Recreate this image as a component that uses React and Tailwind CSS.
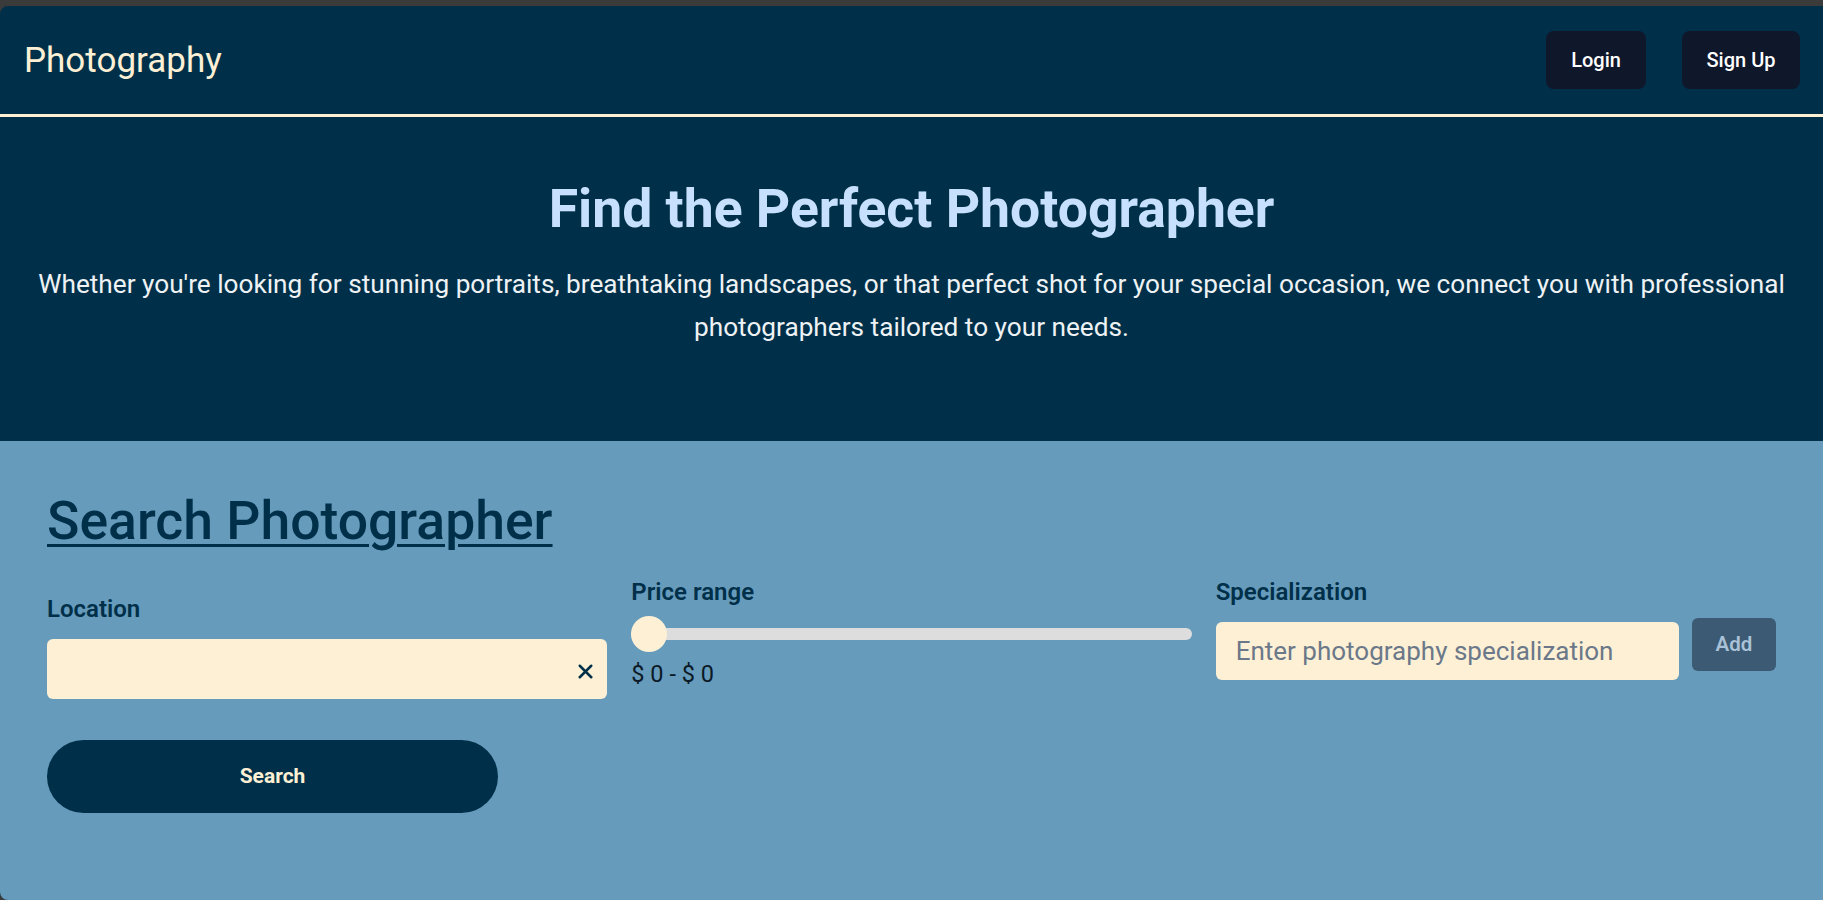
import { X } from 'lucide-react';

const font = { fontFamily: 'Roboto, "Noto Sans", sans-serif' };

function Navbar() {
  return (
    <nav className="flex items-center justify-between h-[111px] pl-[24px] pr-[23px] border-b-[3px] border-[#fdf0d5]">
      <span className="text-[35px] text-[#fdf0d5] leading-none">Photography</span>
      <div className="flex items-center gap-[36px]">
        <button className="w-[100px] h-[58px] rounded-lg bg-[#0f172a] text-white text-[20px] font-medium">Login</button>
        <button className="w-[118px] h-[58px] rounded-lg bg-[#0f172a] text-white text-[20px] font-medium">Sign Up</button>
      </div>
    </nav>
  );
}

function Hero() {
  return (
    <section className="h-[324px] pt-[62px] px-[20px] text-center">
      <h1 className="text-[53.5px] leading-[60px] font-bold text-[#c7e0fd]">Find the Perfect Photographer</h1>
      <p className="mt-[24px] text-[26.2px] leading-[43px] text-[#eef2f4]">
        Whether you're looking for stunning portraits, breathtaking landscapes, or that perfect shot for your special occasion, we connect you with professional photographers tailored to your needs.
      </p>
    </section>
  );
}

function SearchPanel() {
  return (
    <section className="flex-1 bg-[#669bbc] pt-[53px] px-[47px]">
      <h2 className="text-[53.5px] leading-[54px] font-medium text-[#003049] underline decoration-[3px] underline-offset-[5px]">
        Search Photographer
      </h2>

      <div className="grid grid-cols-3 gap-6 mt-[30px] items-start">
        {/* location */}
        <div className="flex flex-col mt-[17px]">
          <label className="text-[24px] leading-[28px] font-semibold text-[#003049]">Location</label>
          <div className="relative mt-[16px] h-[60px] rounded-md bg-[#fdf0d5]">
            <X className="absolute right-[10px] top-[21px] w-[23px] h-[23px] text-[#003049]" strokeWidth={2.6} />
          </div>
        </div>

        {/* price range */}
        <div className="flex flex-col">
          <label className="text-[24px] leading-[28px] font-semibold text-[#003049]">Price range</label>
          <div className="relative mt-[10px] h-[36px] flex items-center">
            <div className="w-full h-[12px] rounded-full bg-[#dddddd]" />
            <div className="absolute left-0 top-0 w-[36px] h-[36px] rounded-full bg-[#fdf0d5]" />
          </div>
          <span className="mt-[8px] text-[23.5px] leading-[28px] text-[#0b1a26]">$ 0 - $ 0</span>
        </div>

        {/* specialization */}
        <div className="flex flex-col">
          <label className="text-[24px] leading-[28px] font-semibold text-[#003049]">Specialization</label>
          <div className="flex items-start gap-[13px] mt-[12px]">
            <div className="flex-1 mt-[4px] h-[58px] rounded-md bg-[#fdf0d5] flex items-center px-[20px]">
              <span className="text-[26px] text-[#6b7889] whitespace-nowrap">Enter photography specialization</span>
            </div>
            <button className="w-[84px] h-[53px] rounded-md bg-[#3c5a73] text-[#a9c2d7] text-[20.5px] font-semibold">Add</button>
          </div>
        </div>
      </div>

      <button className="mt-[41px] w-[451px] h-[73px] rounded-full bg-[#003049] text-[#fdf0d5] text-[21px] font-bold">
        Search
      </button>
    </section>
  );
}

export default function App() {
  return (
    <div className="w-full h-[900px] bg-[#3b3b3b] pt-[6px]" style={font}>
      <div className="h-[894px] flex flex-col bg-[#003049] rounded-l-lg overflow-hidden">
        <Navbar />
        <Hero />
        <SearchPanel />
      </div>
    </div>
  );
}
